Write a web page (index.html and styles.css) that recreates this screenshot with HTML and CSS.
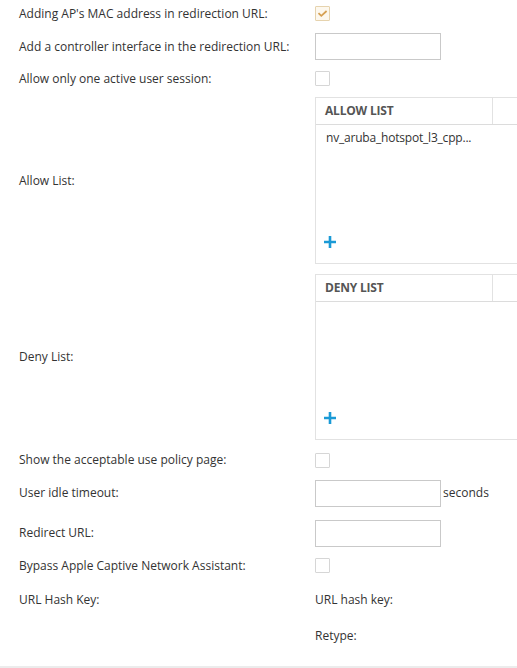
FILE: index.html
```html
<!DOCTYPE html>
<html>
<head>
<meta charset="utf-8">
<link rel="stylesheet" href="styles.css">
</head>
<body>
<div class="page">
  <div class="form">
    <div class="row h27">
      <div class="label">Adding AP's MAC address in redirection URL:</div>
      <div class="control"><span class="cb checked"><svg viewBox="0 0 15 15" width="15" height="15"><path d="M3.5 7.2 L6.3 9.8 L11.6 5" fill="none" stroke="#d6a052" stroke-width="1.8"/></svg></span></div>
    </div>
    <div class="row h39">
      <div class="label">Add a controller interface in the redirection URL:</div>
      <div class="control"><span class="input"></span></div>
    </div>
    <div class="row h25">
      <div class="label">Allow only one active user session:</div>
      <div class="control"><span class="cb"></span></div>
    </div>
    <div class="row h179">
      <div class="label">Allow List:</div>
      <div class="control clip">
        <div class="list">
          <div class="list-head"><span class="list-title">ALLOW LIST</span><span class="list-col"></span></div>
          <div class="list-body">
            <div class="list-item">nv_aruba_hotspot_l3_cpp...</div>
          </div>
          <div class="list-add"><svg viewBox="0 0 14 14" width="14" height="14"><path d="M7 1 V13 M1 7 H13" stroke="#1a9ad6" stroke-width="2.6"/></svg></div>
        </div>
      </div>
    </div>
    <div class="row h174">
      <div class="label">Deny List:</div>
      <div class="control clip">
        <div class="list list-short">
          <div class="list-head"><span class="list-title">DENY LIST</span><span class="list-col"></span></div>
          <div class="list-body"></div>
          <div class="list-add"><svg viewBox="0 0 14 14" width="14" height="14"><path d="M7 1 V13 M1 7 H13" stroke="#1a9ad6" stroke-width="2.6"/></svg></div>
        </div>
      </div>
    </div>
    <div class="row h32">
      <div class="label">Show the acceptable use policy page:</div>
      <div class="control"><span class="cb"></span></div>
    </div>
    <div class="row h34">
      <div class="label">User idle timeout:</div>
      <div class="control"><span class="input"></span><span class="unit">seconds</span></div>
    </div>
    <div class="row h46">
      <div class="label">Redirect URL:</div>
      <div class="control"><span class="input"></span></div>
    </div>
    <div class="row h19">
      <div class="label">Bypass Apple Captive Network Assistant:</div>
      <div class="control"><span class="cb"></span></div>
    </div>
    <div class="row h50">
      <div class="label">URL Hash Key:</div>
      <div class="control"><span class="sub">URL hash key:</span></div>
    </div>
    <div class="row h22">
      <div class="label"></div>
      <div class="control"><span class="sub">Retype:</span></div>
    </div>
  </div>
  <div class="footer"></div>
</div>
</body>
</html>
```

FILE: styles.css
```css
* { box-sizing: border-box; }
html, body { margin: 0; padding: 0; background: #fff; }
body {
  font-family: "Open Sans", "Liberation Sans", sans-serif;
  font-size: 12px;
  color: #333;
  width: 517px;
  height: 668px;
  overflow: hidden;
}
.page { display: flex; flex-direction: column; height: 668px; }
.form { flex: 1; display: flex; flex-direction: column; }
.row {
  display: grid;
  grid-template-columns: 296px 1fr;
  align-items: center;
  padding-left: 19px;
}
.h27 { height: 27px; }
.h39 { height: 39px; }
.h25 { height: 25px; }
.h179 { height: 179px; }
.h174 { height: 174px; }
.h32 { height: 32px; }
.h34 { height: 34px; }
.h46 { height: 46px; }
.h19 { height: 19px; }
.h50 { height: 50px; }
.h22 { height: 22px; }
.label { white-space: nowrap; line-height: 16px; }
.control { display: flex; align-items: center; min-width: 0; }
.control.clip { overflow: hidden; }
.cb {
  display: block;
  flex-shrink: 0;
  width: 15px; height: 15px;
  border: 1px solid #d6d6d6;
  border-radius: 1px;
  background: #fff;
  position: relative;
}
.cb.checked { border-color: #e6d3ae; background: #fdf8ee; }
.cb svg { position: absolute; left: -1px; top: -1px; }
.input {
  display: block;
  flex-shrink: 0;
  width: 126px; height: 27px;
  border: 1px solid #c9c9c9;
  background: #fff;
}
.unit { margin-left: 2px; line-height: 16px; white-space: nowrap; }
.sub { line-height: 16px; white-space: nowrap; }
.list {
  flex-shrink: 0;
  width: 260px;
  height: 167px;
  border: 1px solid #e2e2e2;
  display: flex;
  flex-direction: column;
}
.list-short { height: 166px; }
.list-head {
  height: 27px;
  display: flex;
  border-bottom: 1px solid #dcdcdc;
  flex-shrink: 0;
}
.list-title {
  width: 177px;
  padding-left: 9px;
  font-weight: bold;
  color: #555;
  line-height: 26px;
  border-right: 1px solid #e2e2e2;
  letter-spacing: -0.2px;
}
.list-col { flex: 1; }
.list-body { flex: 1; padding: 5px 0 0 10px; }
.list-item { line-height: 16px; color: #333; letter-spacing: -0.2px; }
.list-add { height: 37px; padding: 9px 0 0 7px; }
.list-add svg { display: block; }
.footer { height: 2px; background: #ececec; flex-shrink: 0; }
```
